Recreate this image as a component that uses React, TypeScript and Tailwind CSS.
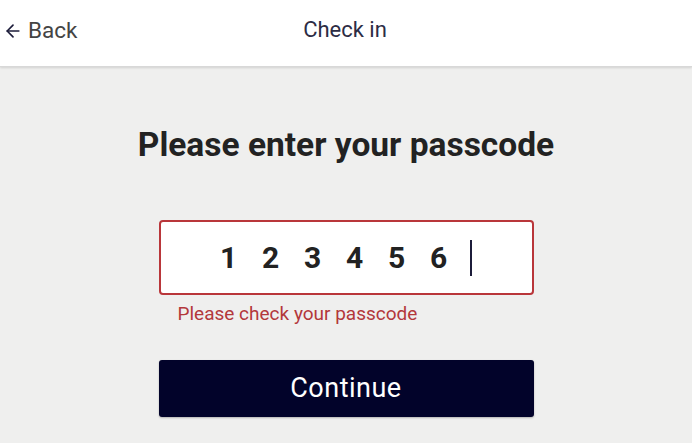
import { ArrowLeft } from "lucide-react";

export default function App() {
  const digits = ["1", "2", "3", "4", "5", "6"];

  return (
    <div
      className="min-h-[443px] w-full bg-[#efefee] flex flex-col"
      style={{ fontFamily: "Roboto, 'Liberation Sans', sans-serif" }}
    >
      <header className="relative h-[67px] bg-white border-b border-[#d8d8d8] shadow-[0_1px_2px_rgba(0,0,0,0.12)] flex items-center justify-center">
        <button className="absolute left-[3px] top-[14px] flex items-center gap-[5px] text-[22.5px] text-[#444]">
          <ArrowLeft size={20} strokeWidth={2} className="text-[#1c1c3a]" />
          <span>Back</span>
        </button>
        <h1 className="text-[22px] text-[#2c2c44] -mt-[7px] -ml-[2px]">Check in</h1>
      </header>

      <main className="flex flex-col items-center pt-[58px]">
        <h2 className="text-[33.5px] font-bold text-[#222] leading-[40px]">
          Please enter your passcode
        </h2>

        <div className="mt-[55px] w-[375px]">
          <div className="h-[75px] bg-white border-2 border-[#b9363a] rounded-[4px] flex items-center pl-[47px]">
            {digits.map((d) => (
              <span
                key={d}
                className="w-[42px] text-center text-[30px] font-bold text-[#222]"
              >
                {d}
              </span>
            ))}
            <span className="ml-[10px] w-[2px] h-[36px] bg-[#1c1c3a]" />
          </div>
          <p className="mt-[5px] pl-[19px] text-[19px] text-[#b3383b]">
            Please check your passcode
          </p>
          <button className="mt-[31px] w-full h-[57px] bg-[#02032a] rounded-[3px] text-white text-[27px] tracking-[0.5px] shadow-[0_1px_2px_rgba(0,0,0,0.25)]">
            Continue
          </button>
        </div>
      </main>
    </div>
  );
}
